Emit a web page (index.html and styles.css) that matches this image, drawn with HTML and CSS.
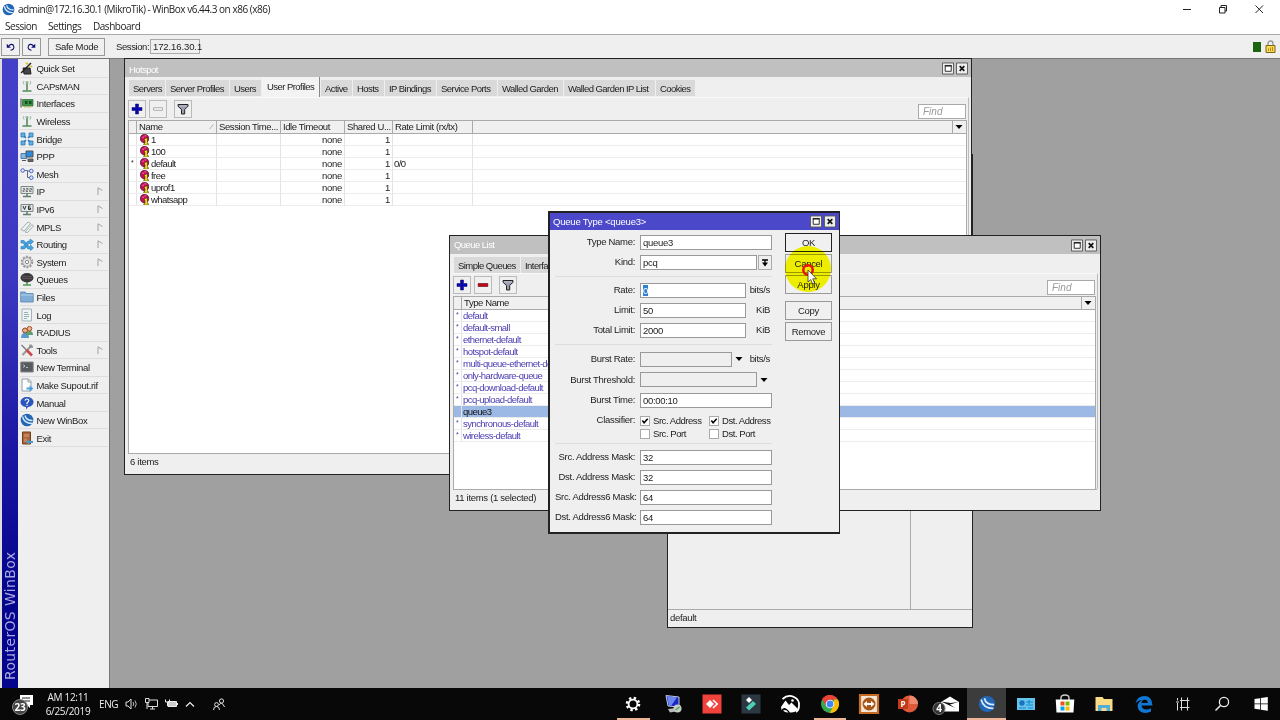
FILE: index.html
```html
<!DOCTYPE html>
<html lang="en">
<head>
  <meta charset="UTF-8" />
  <title>admin@172.16.30.1 (MikroTik) - WinBox</title>
  <link rel="stylesheet" href="styles.css">
</head>
<body>

  <!-- shared icons -->
  <svg class="defs">
    <symbol id="i-plus" viewBox="0 0 12 12"><path d="M4.500 1h3v3.500H11v3H7.500V11h-3V7.500H1v-3h3.500z" fill="#0808b0" stroke="#000060" stroke-width=".5"/></symbol>
    <symbol id="i-minus" viewBox="0 0 12 12"><path d="M1.200 4.500h9.600v3H1.200z" fill="#c0081c" stroke="#600008" stroke-width=".6"/></symbol>
    <symbol id="i-minus-off" viewBox="0 0 12 12"><path d="M1.500 4.700h9v2.600h-9z" fill="#f4f4f4" stroke="#b0b0b0" stroke-width="1"/></symbol>
    <symbol id="i-filter" viewBox="0 0 12 12"><path d="M1 1.500h10v1.700L7.700 6.500V11H4.500V6.500L1 3.200z" fill="#9c9cb0" stroke="#222" stroke-width="1"/><path d="M2 3h8" stroke="#dde" stroke-width=".6"/></symbol>
    <symbol id="i-max" viewBox="0 0 13 13"><path d="M.5.5h12v12H.5z" fill="#eee" stroke="#555"/><path d="M3.500 3.500h6.500v6H3.500z" fill="#fff" stroke="#222"/><path d="M3 3.500h7.500" stroke="#222" stroke-width="1.500"/></symbol>
    <symbol id="i-close" viewBox="0 0 13 13"><path d="M.5.5h12v12H.5z" fill="#eee" stroke="#555"/><path d="M4 4l5 5M9 4l-5 5" stroke="#111" stroke-width="1.800"/></symbol>
    <symbol id="i-down" viewBox="0 0 8 8"><path d="M.5 2h7L4 6z"/></symbol>
    <symbol id="i-user" viewBox="0 0 11 12"><circle cx="5" cy="5" r="4.500" fill="#c4105c" stroke="#400018" stroke-width=".8"/><path d="M2.500 3.500h2M5 2h2" stroke="#ff80b0"/><path d="M4.500 5.500l3.500-1.500v6.500h1.200V12H4.200v-1.500h1.300V7z" fill="#fff020" stroke="#332200" stroke-width=".6"/></symbol>
    <symbol id="i-antenna" viewBox="0 0 14 14"><path d="M7 4v7.500" stroke="#7a9a80" stroke-width="2"/><path d="M2.500 12h9" stroke="#4f8a5c" stroke-width="1.500"/><path d="M4 5.500Q2.500 3.500 4 2M10 5.500Q11.500 3.500 10 2" fill="none" stroke="#9ab8a0"/><circle cx="7" cy="3.500" r="1.500" fill="#8ab898"/></symbol>
    <symbol id="i-globe" viewBox="0 0 14 14"><circle cx="7" cy="7" r="6.300" fill="#2367b4"/><path d="M2.500 3.500Q4 10.500 12 10.500M5 2.500Q6 7.500 12.500 7.500" fill="none" stroke="#d8ecff" stroke-width="1.300"/></symbol>
    <symbol id="i-sub" viewBox="0 0 6 8"><path d="M1 8V.8L5.500 3.500" fill="none" stroke="#999" stroke-width=".9"/></symbol>
  </svg>

  <header class="titlebar">
    <svg class="app-icon"><use href="#i-globe"/></svg>
    <span class="app-title">admin@172.16.30.1 (MikroTik) - WinBox v6.44.3 on x86 (x86)</span>
    <svg class="caption" viewBox="0 0 84 14">
      <path d="M1 7.500h8M37.500 5.500h5.500v5.500h-5.500zM39 5.500v-2h5.500v5.500H43M73.500 3.500l7.500 7.500M81 3.500l-7.500 7.500" fill="none" stroke="#222" stroke-width="1"/>
    </svg>
  </header>

  <nav class="menubar">
    <span class="m-session">Session</span>
    <span class="m-settings">Settings</span>
    <span class="m-dash">Dashboard</span>
  </nav>

  <div class="toolbar">
    <button class="tool undo"><svg viewBox="0 0 12 12"><path d="M4 4.500Q8.500 1 9.800 5T6 10" fill="none" stroke="#101070" stroke-width="1.300"/><path d="M1.500 2v5h5z" fill="#101070"/></svg></button>
    <button class="tool redo"><svg viewBox="0 0 12 12"><path d="M8.500 4.500Q3.500 1 2.200 5T6 10" fill="none" stroke="#101070" stroke-width="1.300"/><path d="M10.500 2v5h-5z" fill="#101070"/></svg></button>
    <button class="safe">Safe Mode</button>
    <span class="session-label">Session:</span>
    <span class="session-ip">172.16.30.1</span>
    <span class="led"></span>
    <svg class="lock" viewBox="0 0 11 13"><path d="M3 6V3.500a2.500 2.500 0 0 1 5 0V6" fill="none" stroke="#999" stroke-width="1.400"/><path d="M1 5.500h9v7H1z" fill="#f5dc50" stroke="#80641c"/><path d="M3.500 11V8.500M5.500 11V7.500M7.500 11V7" stroke="#c08a20"/></svg>
  </div>

  <main class="desktop">
    <aside class="sidebar">
      <div class="brand"><span>RouterOS WinBox</span></div>
      <ul class="menu">
        <li><svg viewBox="0 0 14 14"><path d="M3 7h7l1 6H4z" fill="#444" stroke="#222"/><path d="M1 12L11 2" stroke="#222" stroke-width="1.500"/><path d="M7 1v3M5.500 2.500h3M11 4v3M9.500 5.500h3" stroke="#d8c840"/></svg><span>Quick Set</span></li>
        <li><svg><use href="#i-antenna"/></svg><span>CAPsMAN</span></li>
        <li><svg viewBox="0 0 14 14"><path d="M1 2.500v9" stroke="#777" stroke-width="1.500"/><path d="M2.500 3.500H13V10H2.500z" fill="#3b9447" stroke="#246b30" stroke-width=".7"/><path d="M5 5h2.500v3H5zM9 5h2.500v3H9z" fill="#174d22"/><path d="M4 11h7" stroke="#c9b95a"/></svg><span>Interfaces</span></li>
        <li><svg><use href="#i-antenna"/></svg><span>Wireless</span></li>
        <li><svg viewBox="0 0 14 14"><path d="M1 1h4v4H1zM9 1h4v4H9zM1 9h4v4H1zM9 9h4v4H9z" fill="#62b0e4" stroke="#2778b8" stroke-width=".8"/><path d="M4 4l2 2M10 4L8 6M4 10l2-2M10 10L8 8" stroke="#2778b8" stroke-width="1.400"/></svg><span>Bridge</span></li>
        <li><svg viewBox="0 0 14 14"><path d="M1 4.500h6v5H1z" fill="#87b8e0" stroke="#4c7caa"/><path d="M6 2h7v6H6z" fill="#2d8adb" stroke="#555"/><path d="M8 10h5v2.500H8zM2 11.500h4" fill="#666" stroke="#555"/></svg><span>PPP</span></li>
        <li><svg viewBox="0 0 14 14"><path d="M5 3.500h2.500v7M7.500 4H10M7.500 10.500H10" fill="none" stroke="#667"/><g fill="#dde8ff" stroke="#4a68c0"><circle cx="2.700" cy="3.500" r="1.800"/><circle cx="11.300" cy="4" r="1.800"/><circle cx="11.300" cy="10.700" r="1.800"/></g></svg><span>Mesh</span></li>
        <li><svg viewBox="0 0 14 14"><path d="M1 2.500h12v7H1z" fill="#e2e8e8" stroke="#7b8888"/><path d="M7 9.500V12M3 12.500h8" stroke="#647c6c" stroke-width="1.500"/><path d="M3 4.500h1.500v1.500H3v1.500h1.500M6 4.500h2v1.500H6v1.500h2M9.500 4.500h2v1.500h-2v1.500h2" fill="none" stroke="#555" stroke-width=".7"/></svg><span>IP</span><svg class="sub"><use href="#i-sub"/></svg></li>
        <li><svg viewBox="0 0 14 14"><path d="M1 2.500h12v7H1z" fill="#e2e8e8" stroke="#7b8888"/><path d="M7 9.500V12M3 12.500h8" stroke="#647c6c" stroke-width="1.500"/><path d="M3 4l1.500 3.500L6 4M10.500 4H8.500v3.500h2V6h-2" fill="none" stroke="#333"/></svg><span>IPv6</span><svg class="sub"><use href="#i-sub"/></svg></li>
        <li><svg viewBox="0 0 14 14"><path d="M1 9.500L8 2l2.500 1.500L4 11zM5 12l7-7.500 1.500 1.500-6 6.500z" fill="#f1f6f5" stroke="#91a5a2" stroke-width=".9"/></svg><span>MPLS</span><svg class="sub"><use href="#i-sub"/></svg></li>
        <li><svg viewBox="0 0 14 14"><path d="M1 3.500h3l5 6h1.500V8l3 3-3 2.500V12H8L3 6H1zM1 12V9.500h2L8 4h2V2l3.500 2.500-3 3V6.500H9L4.500 12z" fill="#45a5e2" stroke="#2a7dbc" stroke-width=".6"/></svg><span>Routing</span><svg class="sub"><use href="#i-sub"/></svg></li>
        <li><svg viewBox="0 0 14 14"><circle cx="7" cy="7" r="5.400" fill="none" stroke="#999" stroke-width="1.700" stroke-dasharray="2 1.390"/><circle cx="7" cy="7" r="4.300" fill="#e7e7e7" stroke="#8a8a8a" stroke-width=".8"/><circle cx="7" cy="7" r="1.700" fill="#fff" stroke="#888"/></svg><span>System</span><svg class="sub"><use href="#i-sub"/></svg></li>
        <li><svg viewBox="0 0 14 14"><path d="M7 9v4M3 13h8" stroke="#4b9b58" stroke-width="1.500"/><ellipse cx="7" cy="5.700" rx="6.500" ry="4.700" fill="#39393c"/><path d="M2 4.500h10M2 6.500h10" stroke="#6f5960" stroke-width=".8"/></svg><span>Queues</span></li>
        <li><svg viewBox="0 0 14 14"><path d="M.7 12V2h4.500l1 1.500h7V12z" fill="#7fadd6" stroke="#5284b0" stroke-width=".8"/><path d="M1 5h12" stroke="#b5d3ec"/></svg><span>Files</span></li>
        <li><svg viewBox="0 0 14 14"><path d="M2 1h9.500v12H2z" fill="#eef4f4" stroke="#a1b4b8"/><path d="M4 4.500h4M4 6.500h5M4 8.500h5M4 10.500h3" stroke="#88a0a4" stroke-width=".8"/></svg><span>Log</span></li>
        <li><svg viewBox="0 0 14 14"><path d="M1 13q0-5 4-5t4 5z" fill="#579bd0"/><path d="M6 10q0-4 3.500-4T13 10z" fill="#5aa06a"/><circle cx="5" cy="5.500" r="2.500" fill="#e2ac84" stroke="#964a28"/><circle cx="9.500" cy="3.700" r="2.300" fill="#e7b890" stroke="#a44d2c"/></svg><span>RADIUS</span></li>
        <li><svg viewBox="0 0 14 14"><path d="M12 2L2.500 12" stroke="#999" stroke-width="2"/><path d="M10 1.500v2.500h3" fill="none" stroke="#888" stroke-width="1.300"/><path d="M1.500 2l5 5" stroke="#777" stroke-width="1.300"/><path d="M6.500 7l5.500 5.500" stroke="#d0474b" stroke-width="2.600"/></svg><span>Tools</span><svg class="sub"><use href="#i-sub"/></svg></li>
        <li><svg viewBox="0 0 14 14"><path d="M.8 2h12.400v10H.8z" fill="#555b5e" stroke="#888"/><path d="M3 4.500l2 1.500-2 1.500M6 7.500h2" fill="none" stroke="#ddd" stroke-width=".8"/></svg><span>New Terminal</span></li>
        <li><svg viewBox="0 0 14 14"><path d="M2 1h6.500L11 3.500V13H2z" fill="#fcfdfd" stroke="#90a0aa"/><path d="M8 1v3h3" fill="none" stroke="#90a0aa"/><path d="M6.500 9.500h3v-2l4 3-4 3v-2h-3z" fill="#4aa0dc"/></svg><span>Make Supout.rif</span></li>
        <li><svg viewBox="0 0 14 14"><path d="M7 1a6 5 0 0 1 1 10l-2 2.500V11A6 5 0 0 1 7 1z" fill="#2856bc"/><path d="M5 4.700Q5.300 3 7 3t1.800 1.600Q8.800 6 7 6.800V8M7 8.700V10" fill="none" stroke="#fff" stroke-width="1.200"/></svg><span>Manual</span></li>
        <li><svg><use href="#i-globe"/></svg><span>New WinBox</span></li>
        <li><svg viewBox="0 0 14 14"><path d="M2.500 1h8v12h-8z" fill="#a9663a" stroke="#71401f"/><path d="M4 3h5v3H4zM4 7.500h3V11H4z" fill="#c58458"/><path d="M13 10H9V8l-3 2.800L9 13.500V12h4z" fill="#4b96cc"/></svg><span>Exit</span></li>
      </ul>
    </aside>

    <!-- window left behind the others -->
    <section class="window win-back">
      <div class="back-body"></div>
      <div class="status">default</div>
    </section>

    <!-- Hotspot -->
    <section class="window win-hotspot">
      <div class="win-title"><span>Hotspot</span><svg class="wbtn"><use href="#i-max"/></svg><svg class="wbtn"><use href="#i-close"/></svg></div>
      <div class="tabs tabs-hotspot">
        <span>Servers</span><span>Server Profiles</span><span>Users</span><span class="active">User Profiles</span><span>Active</span><span>Hosts</span><span>IP Bindings</span><span>Service Ports</span><span>Walled Garden</span><span>Walled Garden IP List</span><span>Cookies</span>
      </div>
      <div class="pane">
        <div class="actions">
          <button><svg><use href="#i-plus"/></svg></button>
          <button><svg><use href="#i-minus-off"/></svg></button>
          <button class="filter"><svg><use href="#i-filter"/></svg></button>
          <span class="find">Find</span>
        </div>
        <div class="table cols-hotspot">
          <div class="thead"><span></span><span>Name<i class="sort">∕</i></span><span>Session Time...</span><span>Idle Timeout</span><span>Shared U...</span><span>Rate Limit (rx/tx)</span><span></span><span class="drop"><svg><use href="#i-down"/></svg></span></div>
          <div class="row"><span class="flag"></span><span class="user"><svg><use href="#i-user"/></svg>1</span><span></span><span class="num">none</span><span class="num">1</span><span></span></div>
          <div class="row"><span class="flag"></span><span class="user"><svg><use href="#i-user"/></svg>100</span><span></span><span class="num">none</span><span class="num">1</span><span></span></div>
          <div class="row"><span class="flag">*</span><span class="user"><svg><use href="#i-user"/></svg>default</span><span></span><span class="num">none</span><span class="num">1</span><span>0/0</span></div>
          <div class="row"><span class="flag"></span><span class="user"><svg><use href="#i-user"/></svg>free</span><span></span><span class="num">none</span><span class="num">1</span><span></span></div>
          <div class="row"><span class="flag"></span><span class="user"><svg><use href="#i-user"/></svg>uprof1</span><span></span><span class="num">none</span><span class="num">1</span><span></span></div>
          <div class="row"><span class="flag"></span><span class="user"><svg><use href="#i-user"/></svg>whatsapp</span><span></span><span class="num">none</span><span class="num">1</span><span></span></div>
        </div>
      </div>
      <div class="status">6 items</div>
    </section>

    <!-- Queue List -->
    <section class="window win-queues">
      <div class="win-title"><span>Queue List</span><svg class="wbtn"><use href="#i-max"/></svg><svg class="wbtn"><use href="#i-close"/></svg></div>
      <div class="tabs tabs-queues"><span>Simple Queues</span><span>Interface Queues</span></div>
      <div class="pane">
        <div class="actions">
          <button><svg><use href="#i-plus"/></svg></button>
          <button><svg><use href="#i-minus"/></svg></button>
          <button class="filter"><svg><use href="#i-filter"/></svg></button>
          <span class="find">Find</span>
        </div>
        <div class="table cols-queues">
          <div class="thead"><span></span><span>Type Name</span><span></span><span class="drop"><svg><use href="#i-down"/></svg></span></div>
          <div class="row"><span class="flag">*</span><span>default</span></div>
          <div class="row"><span class="flag">*</span><span>default-small</span></div>
          <div class="row"><span class="flag">*</span><span>ethernet-default</span></div>
          <div class="row"><span class="flag">*</span><span>hotspot-default</span></div>
          <div class="row"><span class="flag">*</span><span>multi-queue-ethernet-default</span></div>
          <div class="row"><span class="flag">*</span><span>only-hardware-queue</span></div>
          <div class="row"><span class="flag">*</span><span>pcq-download-default</span></div>
          <div class="row"><span class="flag">*</span><span>pcq-upload-default</span></div>
          <div class="row selected"><span class="flag"></span><span>queue3</span></div>
          <div class="row"><span class="flag">*</span><span>synchronous-default</span></div>
          <div class="row"><span class="flag">*</span><span>wireless-default</span></div>
        </div>
      </div>
      <div class="status">11 items (1 selected)</div>
    </section>

    <!-- Queue Type dialog -->
    <section class="window win-dialog">
      <div class="win-title"><span>Queue Type &lt;queue3&gt;</span><svg class="wbtn"><use href="#i-max"/></svg><svg class="wbtn"><use href="#i-close"/></svg></div>
      <div class="dialog-body">
        <div class="form">
          <div class="field"><label>Type Name:</label><span class="input">queue3</span></div>
          <div class="field"><label>Kind:</label><span class="input w-kind">pcq</span><span class="pick"><svg viewBox="0 0 8 8"><path d="M1 1h6M4 1v4" stroke="#000" stroke-width="1.300"/><path d="M1 3.500h6L4 7.500z"/></svg></span></div>
          <hr>
          <div class="field"><label>Rate:</label><span class="input w-unit"><mark>0</mark></span><span class="unit">bits/s</span></div>
          <div class="field"><label>Limit:</label><span class="input w-unit">50</span><span class="unit">KiB</span></div>
          <div class="field"><label>Total Limit:</label><span class="input w-unit">2000</span><span class="unit">KiB</span></div>
          <hr class="wide">
          <div class="field"><label>Burst Rate:</label><span class="input off w-rate"></span><svg class="arrow"><use href="#i-down"/></svg><span class="unit">bits/s</span></div>
          <div class="field tall"><label>Burst Threshold:</label><span class="input off w-kind"></span><svg class="arrow"><use href="#i-down"/></svg></div>
          <div class="field"><label>Burst Time:</label><span class="input">00:00:10</span></div>
          <div class="field checks"><label>Classifier:</label>
            <div class="check-grid">
              <span><i class="box"><svg viewBox="0 0 9 9"><path d="M1.500 4l2 2.500L7.500 2" fill="none" stroke="#000" stroke-width="1.700"/></svg></i>Src. Address</span>
              <span><i class="box"><svg viewBox="0 0 9 9"><path d="M1.500 4l2 2.500L7.500 2" fill="none" stroke="#000" stroke-width="1.700"/></svg></i>Dst. Address</span>
              <span><i class="box"></i>Src. Port</span>
              <span><i class="box"></i>Dst. Port</span>
            </div>
          </div>
          <hr>
          <div class="field"><label>Src. Address Mask:</label><span class="input">32</span></div>
          <div class="field"><label>Dst. Address Mask:</label><span class="input">32</span></div>
          <div class="field"><label>Src. Address6 Mask:</label><span class="input">64</span></div>
          <div class="field"><label>Dst. Address6 Mask:</label><span class="input">64</span></div>
        </div>
        <div class="dialog-buttons">
          <button class="default">OK</button>
          <button>Cancel</button>
          <button>Apply</button>
          <button class="gap">Copy</button>
          <button>Remove</button>
        </div>
      </div>
      <!-- click highlight and pointer -->
      <div class="halo"></div>
      <svg class="pointer" viewBox="0 0 22 26"><circle cx="7" cy="7" r="4.700" fill="none" stroke="#e81408" stroke-width="2.600"/><path d="M7 7v12l2.700-2.500 1.900 4.300 2-.9-1.900-4.100h3.800z" fill="#fff" stroke="#333" stroke-width=".8"/></svg>
    </section>
  </main>

  <footer class="taskbar">
    <div class="tray">
      <svg class="note" viewBox="0 0 22 22"><path d="M8 2h13v10h-3v3l-3-3H8z" fill="#fff"/><path d="M10 5h8M10 8h8" stroke="#222"/><circle cx="8" cy="14" r="7.500" fill="#444" stroke="#888"/><text x="8" y="17.500" class="badge">23</text></svg>
      <div class="clock"><span>AM 12:11</span><span>6/25/2019</span></div>
      <span class="lang">ENG</span>
      <svg class="t-snd" viewBox="0 0 13 12"><path d="M1 4h2l3-3v10L3 8H1z" fill="none" stroke="#ddd"/><path d="M8 4q1.500 2 0 4M10 2.500q2.500 3.500 0 7" fill="none" stroke="#ccc" stroke-width=".9"/></svg>
      <svg class="t-net" viewBox="0 0 13 12"><path d="M4 2h8.500v6.500H3V5M7.500 8.500V11M5 11h5" fill="none" stroke="#ddd"/><path d="M.5.5h3.500v4H.5zM2 4.500V11" fill="none" stroke="#ddd"/></svg>
      <svg class="t-bat" viewBox="0 0 13 12"><path d="M3 3.500h8.500v5H3z" fill="#ccc" stroke="#eee"/><path d="M12.500 5v2" stroke="#eee"/><path d="M.5 1.500v2.500h4V1.500M2.500 4v4" fill="none" stroke="#eee"/></svg>
      <svg class="t-up" viewBox="0 0 10 8"><path d="M1 6.500l4-4 4 4" fill="none" stroke="#eee" stroke-width="1.200"/></svg>
      <svg class="t-ppl" viewBox="0 0 12 13"><g fill="none" stroke="#ddd"><circle cx="8.500" cy="3" r="2.100"/><circle cx="3.500" cy="6.500" r="1.900"/><path d="M.5 12q0-3.500 3-3.500t3 3.500M6 7q1-1.700 2.500-1.700T11.500 9"/></g></svg>
    </div>
    <div class="apps">
      <span class="app running"><svg viewBox="0 0 20 20"><circle cx="10" cy="10" r="6" fill="none" stroke="#fff" stroke-width="2.600" stroke-dasharray="2.350 2.360"/><circle cx="10" cy="10" r="4.400" fill="none" stroke="#fff" stroke-width="1.800"/></svg></span>
      <span class="app"><svg viewBox="0 0 20 20"><path d="M3 1.500l13 1.500v10L5 12z" fill="#1725c5" stroke="#c4c8dc"/><path d="M4 2l10 1.500L8 12H6z" fill="#6c86f0"/><path d="M5 15l8-1 2 3-8 1.500z" fill="#bbb"/><circle cx="14.500" cy="14.500" r="4" fill="#c7cec7"/><path d="M12.500 16l4-3" stroke="#47a052" stroke-width="1.300"/></svg></span>
      <span class="app"><svg viewBox="0 0 20 20"><path d="M.5.5h19v19H.5z" fill="#f0433b"/><path d="M4 10l4-4 4 4-4 4z" fill="#fff"/><path d="M11 6l4.200 4-4.200 4" fill="none" stroke="#fff" stroke-width="1.600"/></svg></span>
      <span class="app"><svg viewBox="0 0 20 20"><path d="M.5.5h19v19H.5z" fill="#2c3841"/><path d="M5 6l3-3 3 3-3 3z" fill="#fff"/><path d="M5 13.500L12 7l3 3-7 6.500z" fill="#4bd0b5"/></svg></span>
      <span class="app"><svg viewBox="0 0 20 20"><path d="M2.500 5Q8 0 14 3t5 9q0 4-3 6" fill="none" stroke="#fff" stroke-width="1.800"/><path d="M1 13l4.500-6.500L9 11l2.500-2.500L18 15q-3 4-8 3.500-2-3.500-5-4.500-2-.5-3.500 2z" fill="#fff"/><circle cx="12.500" cy="6.500" r="1.300" fill="#fff"/><path d="M3 16.500q3-1.500 5.500 2-3 .5-5.500-2z" fill="#fff"/></svg></span>
      <span class="app running"><svg viewBox="0 0 20 20"><circle cx="10" cy="10" r="9" fill="#34a853"/><path d="M2.200 5.500A9 9 0 0 1 17.800 5.500L10 6z" fill="#ea4335"/><path d="M2.200 5.500L6.500 12.500 10 10V1A9 9 0 0 0 2.200 5.500z" fill="#ea4335"/><path d="M17.800 5.500A9 9 0 0 1 9.700 19L14 11V5.500z" fill="#fbbc05"/><circle cx="10" cy="10" r="4.300" fill="#fff"/><circle cx="10" cy="10" r="3.400" fill="#4285f4"/></svg></span>
      <span class="app"><svg viewBox="0 0 20 20"><path d="M1 1h18v18H1z" fill="#f4e6d6" stroke="#c56a22" stroke-width="2.200"/><circle cx="10" cy="10" r="6.500" fill="#a8571a"/><path d="M4.500 10l3.500-3v2h4V7l3.500 3-3.500 3v-2H8v2z" fill="#fff"/></svg></span>
      <span class="app"><svg viewBox="0 0 20 20"><circle cx="11.500" cy="10" r="8.500" fill="#e0593a"/><path d="M11.500 1.500A8.500 8.500 0 0 1 20 10h-8.500z" fill="#f08a6e"/><path d="M0 5h10v10H0z" fill="#c13b1b"/><text x="2.500" y="13.200" class="pp">P</text></svg></span>
      <span class="app mail"><svg viewBox="0 0 26 20"><path d="M7 8l9-5.500L25 8v9.500H7z" fill="#fff"/><path d="M7 7.500l9.500 1.500 8-1-8.500 2.500 5 3.500z" fill="#111"/><circle cx="5" cy="14.500" r="6" fill="#333" stroke="#777"/><text x="5" y="18.200" class="badge">4</text></svg></span>
      <span class="app current"><svg viewBox="0 0 14 14"><use href="#i-globe"/></svg></span>
      <span class="app"><svg viewBox="0 0 20 20"><path d="M1 4h18v12H1z" fill="#63c4ee"/><circle cx="6" cy="9" r="2.700" fill="#1b74b9"/><path d="M10 8h7M10 11h7M3 14h7M12 14h5M13 6v4" stroke="#1f86c9" stroke-width="1.200"/></svg></span>
      <span class="app"><svg viewBox="0 0 20 20"><path d="M6 7V4q0-3 4-3t4 3v3" fill="none" stroke="#ccc" stroke-width="1.400"/><path d="M.7 5.500h18.600l-.8 13h-17z" fill="#fff"/><path d="M5.500 7.500h4v4h-4z" fill="#f25022"/><path d="M10.500 7.500h4v4h-4z" fill="#7fba00"/><path d="M5.500 12.500h4v4h-4z" fill="#00a4ef"/><path d="M10.500 12.500h4v4h-4z" fill="#ffb900"/></svg></span>
      <span class="app"><svg viewBox="0 0 20 20"><path d="M1.500 17V3h7l1.500 2h8.500v12z" fill="#f7dc84"/><path d="M4 17v-6h12v6h-3.500v-3h-5v3z" fill="#54aed8"/></svg></span>
      <span class="app"><svg viewBox="0 0 20 20"><path d="M1.500 9.500Q3 2 10.500 2 18 2 18.500 11.500H7.500q.5 4 5 4 2.500 0 4.500-1.200v3.300Q14.500 19 11.500 19 4 18.500 3.500 12 4 8 8 6 4 6 1.500 9.500zM7.500 9h6.300Q13.700 5.800 11 5.800 8 5.800 7.500 9z" fill="#0f78d4"/></svg></span>
      <span class="app"><svg viewBox="0 0 20 20"><path d="M4.500 4v2.500M4.500 9v7.500M3 8h3M8.500 3.500v3M14.500 3.500v3M8.500 13.500v3M14.500 13.500v3M7 6.500h9.500M7 13.500h9.500M8.500 6.500v7M14.500 6.500v7" fill="none" stroke="#ddd" stroke-width="1"/></svg></span>
      <span class="app"><svg viewBox="0 0 20 20"><circle cx="12" cy="8" r="4.600" fill="none" stroke="#eee" stroke-width="1.300"/><path d="M8.700 11.300L3.500 16.500" stroke="#eee" stroke-width="1.500"/></svg></span>
      <span class="app"><svg viewBox="0 0 20 20"><path d="M3.500 5l5.500-.8v5.300H3.500zM9.800 4.100l7-1v6.400h-7zM3.500 10.300H9v5.300l-5.500-.8zM9.800 10.300h7v6.500l-7-1z" fill="#fff"/></svg></span>
    </div>
  </footer>

</body>
</html>
```

FILE: styles.css
```css
* {
  margin: 0;
  padding: 0;
  box-sizing: border-box;
}

body {
  width: 1280px;
  height: 720px;
  overflow: hidden;
  display: flex;
  flex-direction: column;
  background: #fff;
  color: #1c1c1c;
  font-family: "Liberation Sans", sans-serif;
  font-size: 9.500px;
  letter-spacing: -0.550px;
  line-height: 12px;
  white-space: nowrap;
}

button {
  font: inherit;
  letter-spacing: inherit;
  color: inherit;
  background: #f0f0f0;
  border: 1px solid #999;
}

svg {
  display: block;
  flex: none;
}

.defs {
  position: absolute;
  width: 0;
  height: 0;
}

/* APP FRAME */
.titlebar,
.menubar {
  font-family: "Open Sans", sans-serif;
  font-size: 10px;
  letter-spacing: -0.480px;
  display: flex;
  align-items: center;
}

.titlebar {
  height: 18px;
  padding: 0 14px 0 2px;
}

.app-icon {
  width: 13px;
  height: 13px;
}

.app-title {
  margin-left: 3px;
  flex: 1;
}

.caption {
  width: 84px;
  height: 14px;
}

.menubar {
  height: 16px;
  padding-left: 5px;
}

.m-session { width: 43px; }
.m-settings { width: 45px; }

.toolbar {
  height: 25px;
  display: flex;
  align-items: center;
  background: #efefef;
  border-top: 1px solid #aaa;
  border-bottom: 1px solid #777;
  padding: 0 4px 0 1px;
}

.tool {
  width: 19px;
  height: 18px;
  margin-right: 2px;
  padding: 3px;
}

.tool svg {
  width: 11px;
  height: 10px;
}

.safe {
  width: 57px;
  height: 18px;
  margin-left: 5px;
  letter-spacing: -0.300px;
}

.session-label {
  margin-left: 11px;
  width: 34px;
  letter-spacing: -0.400px;
}

.session-ip {
  width: 50px;
  height: 15px;
  line-height: 13px;
  padding-left: 2px;
  border: 1px solid #aaa;
  letter-spacing: -0.100px;
}

.led {
  width: 8px;
  height: 10px;
  margin-left: auto;
  background: #1c6410;
}

.lock {
  width: 11px;
  height: 13px;
  margin-left: 4px;
}

/* DESKTOP */
.desktop {
  position: relative;
  height: 629px;
  background: #a0a0a0;
}

.sidebar {
  width: 110px;
  height: 100%;
  display: flex;
  background: #efefef;
  border-right: 1px solid #777;
}

.brand {
  width: 18px;
  display: flex;
  align-items: center;
  writing-mode: vertical-rl;
  transform: rotate(180deg);
  background: linear-gradient(#04048c 15%, #1814a0 35%, #3c38c0 65%, #4440c8);
  border-right: 2px solid #ddd;
}

.brand span {
  margin-top: 8px;
  color: #a8a8e0;
  font: 14px/16px "DejaVu Sans", sans-serif;
  letter-spacing: 0.350px;
}

.menu {
  list-style: none;
  flex: 1;
  padding: 1px 1px 0 2px;
}

.menu li {
  height: 17.600px;
  display: flex;
  align-items: center;
  border-bottom: 1px solid #dcdcdc;
}

.menu svg {
  width: 14px;
  height: 14px;
}

.menu span {
  margin-left: 2.500px;
  padding-top: 2px;
  flex: 1;
  letter-spacing: -0.350px;
}

.menu .sub {
  width: 6px;
  height: 8px;
  margin-right: 5px;
}

/* WINDOWS */
.window {
  position: absolute;
  display: flex;
  flex-direction: column;
  background: #efefef;
  border: 1px solid #222;
}

.win-title {
  height: 18px;
  display: flex;
  align-items: center;
  background: #c0c0c0;
  color: #fff;
  padding: 0 3px 0 4px;
}

.win-title span {
  flex: 1;
}

.wbtn {
  width: 12px;
  height: 13px;
  margin-left: 2px;
}

.win-back {
  left: 667px;
  top: 95px;
  width: 306px;
  height: 474px;
}

.back-body {
  flex: 1;
  width: 243px;
  border-right: 1px solid #aaa;
}

.win-back .status {
  margin: 0;
}

.win-hotspot {
  left: 124px;
  top: -1px;
  width: 848px;
  height: 417px;
}

.win-hotspot .win-title span {
  padding-top: 3px;
}

.win-queues {
  left: 449px;
  top: 176px;
  width: 652px;
  height: 276px;
}

.tabs {
  display: grid;
  height: 20px;
  padding-left: 4px;
  column-gap: 1px;
}

.tabs span {
  height: 16px;
  margin-top: 3px;
  line-height: 17px;
  padding-left: 4px;
  background: #d9d9d9;
}

.tabs .active {
  height: 20px;
  margin-top: 0;
  line-height: 20px;
  padding-left: 5px;
  background: #f3f3f3;
  border-right: 1px solid #888;
}

.tabs-hotspot {
  grid-template-columns: 36px 63px 31px 58px 31px 31px 51px 60px 65px 91px 39px;
}

.tabs-queues {
  height: 19px;
  grid-template-columns: 66px 70px;
}

.pane {
  flex: 1;
  display: flex;
  flex-direction: column;
  margin: 0 2px 0 3px;
  border-top: 1px solid #fafafa;
  border-right: 1px solid #bbb;
}

.actions {
  height: 22px;
  display: flex;
  align-items: center;
  padding-right: 2px;
}

.actions button {
  width: 18px;
  height: 18px;
  margin-right: 3px;
  padding: 2px;
  border-color: #bbb;
}

.actions svg {
  width: 12px;
  height: 12px;
}

.actions .filter {
  margin-left: 4px;
}

.find {
  margin: 4px 0 0 auto;
  width: 48px;
  height: 15px;
  padding-left: 4px;
  line-height: 13px;
  background: #fff;
  border: 1px solid #aaa;
  color: #999;
  font-size: 10px;
  font-style: italic;
  letter-spacing: 0;
}

.table {
  flex: 1;
  margin-right: 1px;
  background: #fff;
  border: 1px solid #aaa;
  border-bottom: 0;
}

.thead,
.row {
  display: grid;
}

.cols-hotspot .thead,
.cols-hotspot .row {
  grid-template-columns: 8px 80px 64px 64px 48px 80px 1fr 13px;
}

.cols-queues .thead,
.cols-queues .row {
  grid-template-columns: 8px 100px 1fr 13px;
}

.thead {
  height: 13px;
  background: #f0f0f0;
  border-bottom: 1px solid #aaa;
  letter-spacing: -0.400px;
}

.thead span {
  padding-left: 2px;
  border-right: 1px solid #aaa;
  display: flex;
  justify-content: space-between;
}

.thead .drop {
  border: 0;
}

.drop svg {
  width: 8px;
  height: 8px;
  margin-top: 2px;
}

.sort {
  font-size: 7px;
  color: #888;
  padding-right: 4px;
}

.row {
  height: 12px;
  border-bottom: 1px solid #ececec;
}

.row span {
  height: 11px;
  padding-left: 1px;
  border-right: 1px solid #e4e4e4;
}

.row .flag {
  font-size: 7px;
  line-height: 10px;
  padding-left: 2px;
}

.row .user {
  display: flex;
  padding-left: 3px;
}

.user svg {
  width: 10px;
  height: 11px;
  margin-right: 1px;
}

.row .num {
  text-align: right;
  padding-right: 2px;
  letter-spacing: -0.300px;
}

.cols-queues .row {
  color: #4a3cb0;
}

.cols-queues .row.selected {
  background: #9cb9e6;
  color: #111;
}

.status {
  height: 18px;
  margin: 0 3px 3px;
  padding: 0 2px;
  line-height: 15px;
  border-top: 1px solid #aaa;
  letter-spacing: -0.300px;
}

/* DIALOG */
.win-dialog {
  left: 548px;
  top: 152px;
  width: 292px;
  height: 323px;
  border-width: 2px 1px 2px 2px;
}

.win-dialog .win-title {
  height: 17px;
  background: #4b49c9;
  padding-left: 3px;
  letter-spacing: -0.200px;
}

.dialog-body {
  display: flex;
  padding: 2px 7px 0 5px;
}

.form {
  width: 217px;
  letter-spacing: -0.300px;
}

.form hr {
  border: 0;
  border-top: 1px solid #ddd;
  margin: 4px 0 3px;
}

.form hr.wide {
  margin-bottom: 4px;
}

.field {
  height: 20px;
  display: flex;
  align-items: center;
}

.field.tall {
  height: 21px;
}

.field label {
  width: 80px;
  margin-right: 5px;
  text-align: right;
  flex: none;
}

.input {
  width: 132px;
  height: 15px;
  flex: none;
  padding-left: 2px;
  line-height: 13px;
  background: #fff;
  border: 1px solid #999;
}

.input.off {
  background: #efefef;
}

.w-kind { width: 117px; }
.w-unit { width: 106px; }
.w-rate { width: 92px; }

.pick {
  width: 14px;
  height: 15px;
  margin-left: 1px;
  padding: 3px 2px;
  border: 1px solid #aaa;
}

.pick svg,
.arrow {
  width: 8px;
  height: 8px;
}

.arrow {
  margin-left: 3px;
}

.unit {
  margin-left: auto;
  padding-right: 2px;
}

.input mark {
  background: #2f7fd4;
  color: #fff;
}

.field.checks {
  height: 29px;
  align-items: flex-start;
  padding-top: 4px;
}

.check-grid {
  display: grid;
  grid-template-columns: 69px 62px;
  grid-auto-rows: 13.500px;
  letter-spacing: -0.450px;
}

.check-grid span {
  display: flex;
  align-items: center;
}

.box {
  width: 10px;
  height: 10px;
  margin-right: 3px;
  background: #fff;
  border: 1px solid #aaa;
}

.box svg {
  width: 8px;
  height: 8px;
}

.dialog-buttons {
  display: flex;
  flex-direction: column;
  gap: 2px;
  padding: 1px 0 0 13px;
  letter-spacing: -0.300px;
}

.dialog-buttons button {
  width: 47px;
  height: 19px;
}

.dialog-buttons .default {
  border-color: #222;
}

.dialog-buttons .gap {
  margin-top: 5px;
}

.halo {
  position: absolute;
  left: 235px;
  top: 33px;
  width: 46px;
  height: 46px;
  border-radius: 50%;
  background: #fcfc00;
  mix-blend-mode: multiply;
}

.pointer {
  position: absolute;
  left: 251px;
  top: 50px;
  width: 22px;
  height: 26px;
}

/* TASKBAR */
.taskbar {
  height: 32px;
  background: #080808;
  color: #eee;
  display: flex;
  justify-content: space-between;
  font-family: "Open Sans", sans-serif;
  font-size: 10px;
  letter-spacing: -0.300px;
}

.tray {
  display: flex;
  align-items: center;
  padding-left: 12px;
}

.note {
  width: 22px;
  height: 22px;
}

.badge {
  fill: #fff;
  font: bold 10px "Open Sans", sans-serif;
  text-anchor: middle;
}

.clock {
  width: 54px;
  margin-left: 7px;
  display: flex;
  flex-direction: column;
  align-items: center;
  line-height: 14.500px;
}

.lang {
  width: 19px;
  margin-left: 4px;
  letter-spacing: -0.400px;
}

.t-snd,
.t-net,
.t-bat {
  width: 13px;
  height: 12px;
  margin-left: 7px;
}

.t-up {
  width: 10px;
  height: 8px;
  margin-left: 7px;
}

.t-ppl {
  width: 12px;
  height: 13px;
  margin-left: 18px;
}

.apps {
  display: grid;
  grid-template-columns: repeat(17, 39.250px);
  margin-right: -1px;
}

.app {
  display: flex;
  align-items: center;
  justify-content: center;
}

.app svg {
  width: 20px;
  height: 20px;
  overflow: visible;
}

.app.mail svg {
  width: 26px;
}

.app.running {
  margin: 0 3.500px;
  border-bottom: 2px solid #edb596;
  padding-top: 2px;
}

.app.current {
  background: #3c3c3c;
  border-bottom: 2px solid #edb596;
  padding-top: 2px;
}

.app.current svg {
  width: 18px;
  height: 18px;
}

.pp {
  fill: #fff;
  font: bold 8px "Open Sans", sans-serif;
}
```
